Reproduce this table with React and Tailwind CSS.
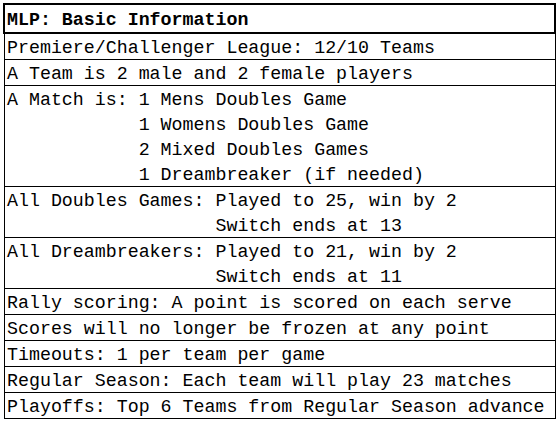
const rows = [
  ['Premiere/Challenger League: 12/10 Teams'],
  ['A Team is 2 male and 2 female players'],
  [
    'A Match is: 1 Mens Doubles Game',
    '            1 Womens Doubles Game',
    '            2 Mixed Doubles Games',
    '            1 Dreambreaker (if needed)',
  ],
  ['All Doubles Games: Played to 25, win by 2', '                   Switch ends at 13'],
  ['All Dreambreakers: Played to 21, win by 2', '                   Switch ends at 11'],
  ['Rally scoring: A point is scored on each serve'],
  ['Scores will no longer be frozen at any point'],
  ['Timeouts: 1 per team per game'],
  ['Regular Season: Each team will play 23 matches'],
  ['Playoffs: Top 6 Teams from Regular Season advance'],
];

export default function App() {
  return (
    <div className="w-[560px] h-[423px] bg-white pt-[3px] pl-[4px] font-['Liberation_Mono','Courier_New',monospace] text-[18.3px] text-black">
      <div className="w-[552px]">
        <div className="-ml-[1px] w-[553px] h-[31px] border-2 border-black pl-[2px] pt-[3px] font-bold leading-[25px]">
          MLP: Basic Information
        </div>
        {rows.map((lines, i) => (
          <div key={i} className="border-x border-b border-black pl-[2px] leading-[25px] whitespace-pre">
            <div className="translate-y-[2px]">
              {lines.map((line, j) => (
                <div key={j}>{line}</div>
              ))}
            </div>
          </div>
        ))}
      </div>
    </div>
  );
}
